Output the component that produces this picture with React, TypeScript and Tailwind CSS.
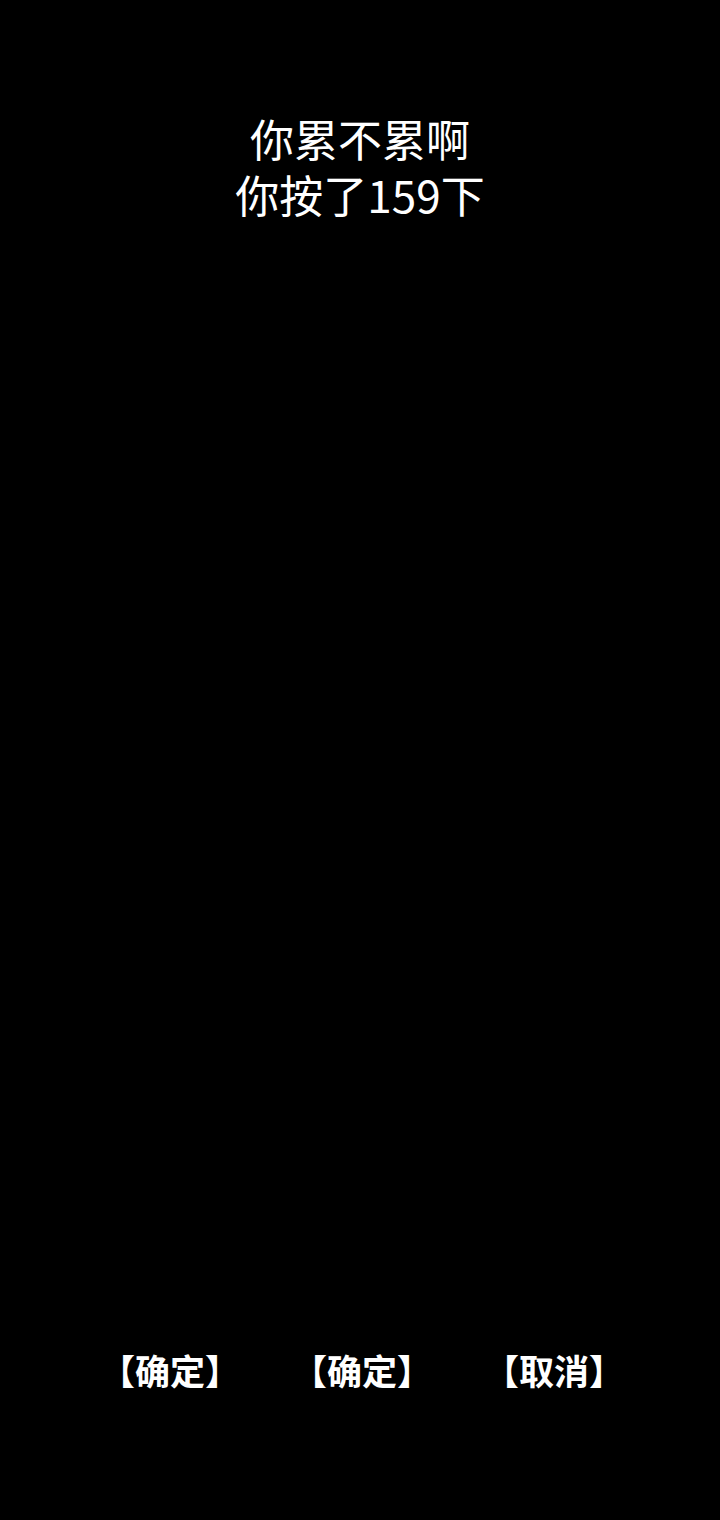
const buttons = ['【确定】', '【确定】', '【取消】'];

export default function App() {
  const count = 159;

  return (
    <div
      className="flex h-[1520px] w-full flex-col bg-black text-white"
      style={{ fontFamily: '"Noto Sans CJK SC", "Noto Sans", sans-serif' }}
    >
      {/* Counter message */}
      <div className="flex flex-col items-center pt-[110px] text-[44px] leading-[56px]">
        <p>你累不累啊</p>
        <p>你按了{count}下</p>
      </div>

      <div className="flex-1" />

      {/* Action buttons */}
      <div className="flex justify-center gap-[56px] pb-[130px]">
        {buttons.map((label, i) => (
          <button key={i} className="w-[136px] text-[35px] font-bold leading-[40px] text-white">
            {label}
          </button>
        ))}
      </div>
    </div>
  );
}
